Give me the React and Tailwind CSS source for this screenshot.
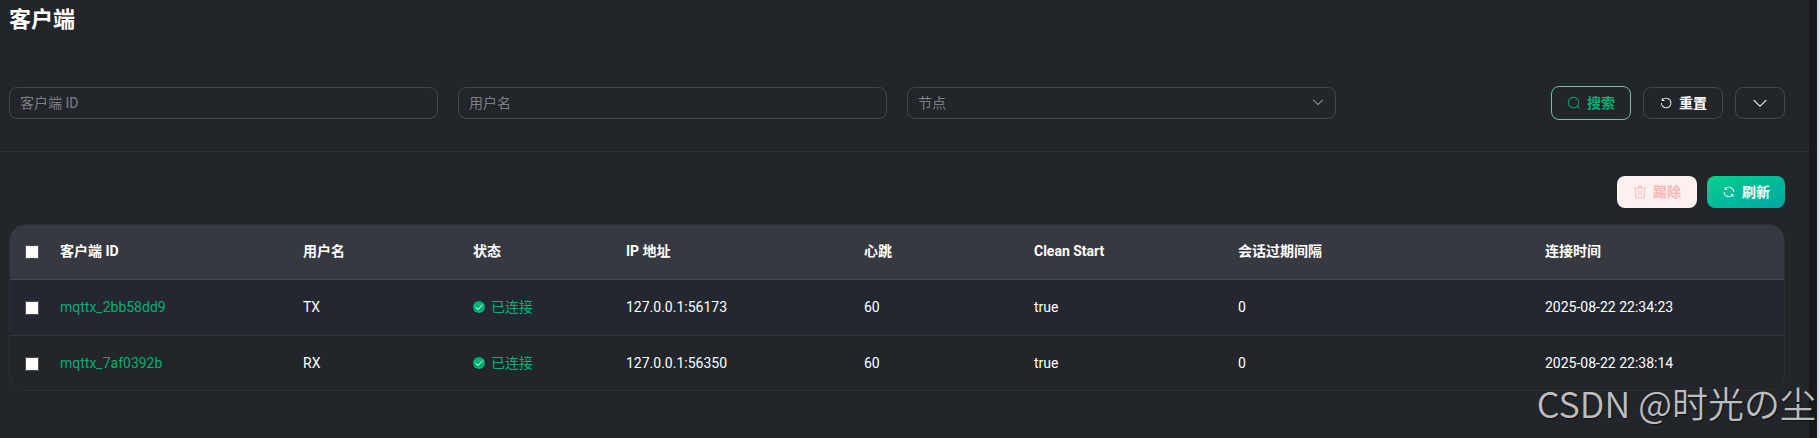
import React, { useState } from 'react';
import clsx from 'clsx';

const ICONS = {
    search: "m795.904 750.72 124.992 124.928a32 32 0 0 1-45.248 45.248L750.656 795.904a416 416 0 1 1 45.248-45.248zM480 832a352 352 0 1 0 0-704 352 352 0 0 0 0 704",
    reset: "M289.088 296.704h92.992a32 32 0 0 1 0 64H232.96a32 32 0 0 1-32-32V179.712a32 32 0 0 1 64 0v50.56a384 384 0 0 1 643.84 282.88 384 384 0 0 1-383.936 384 384 384 0 0 1-384-384h64a320 320 0 1 0 640 0 320 320 0 0 0-555.712-216.448z",
    refresh: "M771.776 794.88A384 384 0 0 1 128 512h64a320 320 0 0 0 555.712 216.448H654.72a32 32 0 1 1 0-64h149.056a32 32 0 0 1 32 32v148.928a32 32 0 1 1-64 0v-50.56zM276.288 295.616h92.992a32 32 0 0 1 0 64H220.16a32 32 0 0 1-32-32V178.56a32 32 0 0 1 64 0v50.56A384 384 0 0 1 896.128 512h-64a320 320 0 0 0-555.776-216.384z",
    trash: "M160 256H96a32 32 0 0 1 0-64h256V95.936a32 32 0 0 1 32-32h256a32 32 0 0 1 32 32V192h256a32 32 0 1 1 0 64h-64v672a32 32 0 0 1-32 32H192a32 32 0 0 1-32-32zm448-64v-64H416v64zM224 896h576V256H224zm192-128a32 32 0 0 1-32-32V416a32 32 0 0 1 64 0v320a32 32 0 0 1-32 32m192 0a32 32 0 0 1-32-32V416a32 32 0 0 1 64 0v320a32 32 0 0 1-32 32",
    down: "M831.872 340.864 512 652.672 192.128 340.864a30.592 30.592 0 0 0-42.752 0 29.12 29.12 0 0 0 0 41.6L489.664 714.24a32 32 0 0 0 44.672 0l340.288-331.712a29.12 29.12 0 0 0 0-41.728 30.592 30.592 0 0 0-42.752 0z",
};

const COLUMNS = [
    { label: '客户端 ID', width: 'w-[243px]' },
    { label: '用户名', width: 'w-[170px]' },
    { label: '状态', width: 'w-[153px]' },
    { label: 'IP 地址', width: 'w-[238px]' },
    { label: '心跳', width: 'w-[170px]' },
    { label: 'Clean Start', width: 'w-[204px]' },
    { label: '会话过期间隔', width: 'w-[307px]' },
    { label: '连接时间', width: 'w-[251px]' },
];

const CLIENTS = [
    { id: 'mqttx_2bb58dd9', username: 'TX', ip: '127.0.0.1:56173', keepalive: 60, cleanStart: 'true', expiry: 0, connectedAt: '2025-08-22 22:34:23' },
    { id: 'mqttx_7af0392b', username: 'RX', ip: '127.0.0.1:56350', keepalive: 60, cleanStart: 'true', expiry: 0, connectedAt: '2025-08-22 22:38:14' },
];

const Icon = ({ name, className = 'size-3.5' }) => (
    <svg viewBox="0 0 1024 1024" fill="currentColor" aria-hidden="true" className={clsx('shrink-0', className)}>
        <path d={ICONS[name]} />
    </svg>
);

const Button = ({ className, children, ...props }) => (
    <button
        type="button"
        className={clsx('flex items-center justify-center gap-1.5 rounded-lg text-sm font-bold whitespace-nowrap', className)}
        {...props}
    >
        {children}
    </button>
);

const Checkbox = (props) => (
    <input
        type="checkbox"
        className="block size-3.5 appearance-none border border-[#4a4d53] bg-white checked:bg-[#00b173]"
        {...props}
    />
);

const Connected = () => (
    <span className="flex items-center gap-1.5 text-[#00b173]">
        <svg viewBox="0 0 12 12" className="size-3 shrink-0" aria-hidden="true">
            <circle cx="6" cy="6" r="6" fill="currentColor" />
            <path d="M2.6 6.2 5 8.5 9.6 3.6" fill="none" stroke="#fff" strokeWidth="1" />
        </svg>
        已连接
    </span>
);

const fieldStyle = 'h-8 w-full rounded-lg border border-[#43464c] bg-transparent px-2.5 text-sm outline-none placeholder:text-[#7c7f86]';

const Filters = () => {
    const [clientId, setClientId] = useState('');
    const [username, setUsername] = useState('');
    const [node, setNode] = useState('');

    const reset = () => {
        setClientId('');
        setUsername('');
        setNode('');
    };

    return (
        <form className="mt-[51px] grid grid-cols-4 items-center gap-5 pr-6 pl-[9px]" onSubmit={(e) => e.preventDefault()}>
            <input aria-label="客户端 ID" placeholder="客户端 ID" value={clientId} onChange={(e) => setClientId(e.target.value)} className={fieldStyle} />
            <input aria-label="用户名" placeholder="用户名" value={username} onChange={(e) => setUsername(e.target.value)} className={fieldStyle} />
            <div className="relative">
                <select
                    aria-label="节点"
                    value={node}
                    onChange={(e) => setNode(e.target.value)}
                    className={clsx(fieldStyle, 'block appearance-none', node ? 'text-white' : 'text-[#7c7f86]')}
                >
                    <option value="" disabled>节点</option>
                </select>
                <Icon name="down" className="pointer-events-none absolute top-2 right-[11px] size-3.5 text-[#b4b6ba]" />
            </div>
            <div className="flex items-center justify-end gap-3">
                <Button type="submit" className="h-[34px] w-20 border border-[#6cc3a9] text-[#00b173]">
                    <Icon name="search" />
                    搜索
                </Button>
                <Button onClick={reset} className="h-8 w-20 border border-[#43464c] text-white">
                    <Icon name="reset" />
                    重置
                </Button>
                <Button aria-label="展开" className="h-8 w-[50px] border border-[#43464c] text-white">
                    <Icon name="down" className="size-[18px]" />
                </Button>
            </div>
        </form>
    );
};

const ClientTable = () => (
    <div className="mt-4 mr-6 ml-[9px] overflow-hidden rounded-2xl border border-[#2d3038]">
        <table className="w-full table-fixed border-separate border-spacing-0 text-left text-sm text-white">
            <colgroup>
                <col className="w-[38px]" />
                {COLUMNS.map((col) => <col key={col.label} className={col.width} />)}
            </colgroup>
            <thead>
                <tr className="h-[55px] bg-[#363940] [&>th]:border-b [&>th]:border-[#474a51] [&>th]:px-3 [&>th]:pb-0.5">
                    <th className="!pt-0.5 !pr-0 !pl-[15px]"><Checkbox aria-label="全选" /></th>
                    {COLUMNS.map((col) => <th key={col.label} scope="col" className="font-bold">{col.label}</th>)}
                </tr>
            </thead>
            <tbody>
                {CLIENTS.map((client) => (
                    <tr
                        key={client.id}
                        className="h-14 odd:bg-[#24272f] last:h-[54px] [&>td]:border-b [&>td]:border-[#34373d] [&>td]:px-3 [&>td]:pb-0.5 last:[&>td]:border-b-0 last:[&>td]:pb-0"
                    >
                        <td className="!pt-0.5 !pr-0 !pl-[15px]"><Checkbox aria-label={client.id} /></td>
                        <td><a href={`#${client.id}`} className="text-[#00b173]">{client.id}</a></td>
                        <td>{client.username}</td>
                        <td><Connected /></td>
                        <td>{client.ip}</td>
                        <td>{client.keepalive}</td>
                        <td>{client.cleanStart}</td>
                        <td>{client.expiry}</td>
                        <td>{client.connectedAt}</td>
                    </tr>
                ))}
            </tbody>
        </table>
    </div>
);

export default function App() {
    return (
        <div className="relative flex min-h-screen bg-[#222529] font-[Roboto,'Noto_Sans_CJK_SC',sans-serif] text-white">
            <main className="min-w-0 flex-1">
                <h1 className="px-[9px] pt-[5px] text-[22px] leading-[30px] font-bold">客户端</h1>

                <Filters />

                <div className="mt-[31px] border-t border-[#303339]"></div>

                <div className="flex justify-end gap-2.5 pt-6 pr-6">
                    <Button disabled className="h-8 w-20 bg-[#fef0f0] text-[#fab6b6]">
                        <Icon name="trash" />
                        踢除
                    </Button>
                    <Button className="h-8 w-[78px] bg-linear-to-br from-[#0ad08b] to-[#00a6a6] text-white">
                        <Icon name="refresh" />
                        刷新
                    </Button>
                </div>

                <ClientTable />
            </main>

            {/* Scrollbar track */}
            <div className="w-[11px] border-r-3 border-[#c9dfe6] bg-[#17181c]"></div>

            <p className="absolute right-1 bottom-4 text-[36px] leading-10 font-[350] whitespace-nowrap text-[#bcbdbe] font-['Noto_Sans_CJK_SC',sans-serif] [text-shadow:1px_1px_1px_#00000080]">
                CSDN @时光の尘
            </p>
        </div>
    );
}
